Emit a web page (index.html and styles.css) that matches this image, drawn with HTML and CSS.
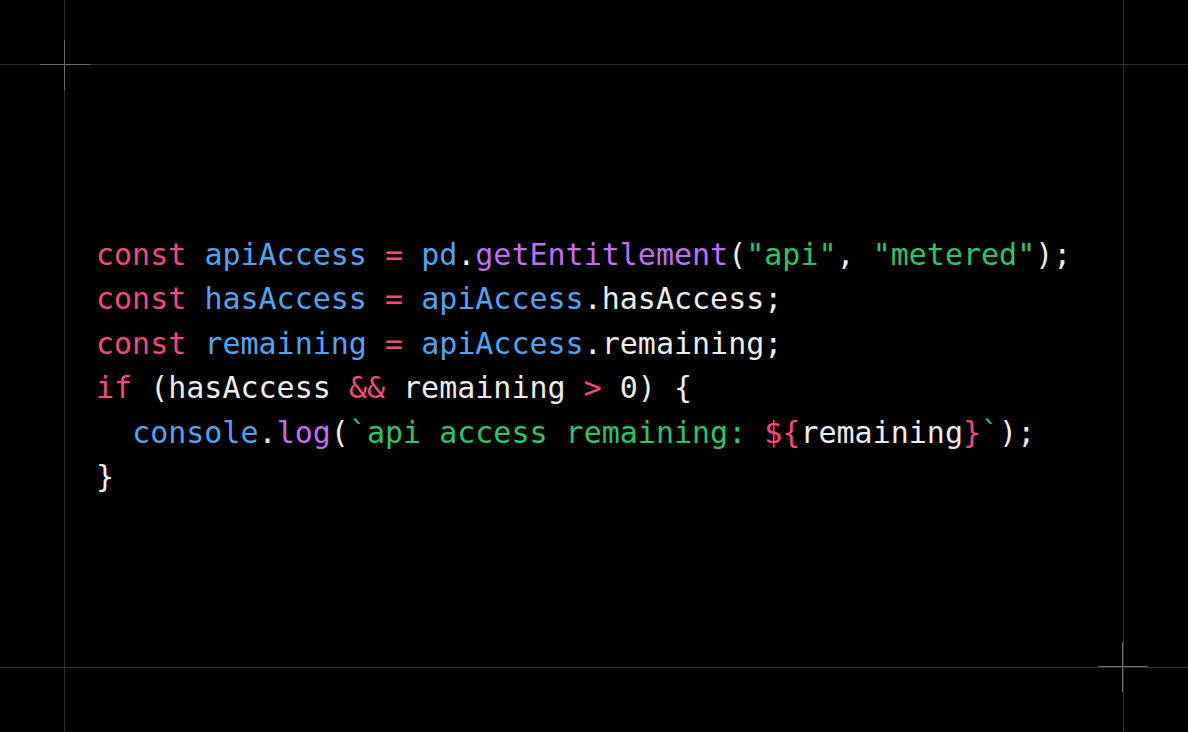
FILE: index.html
```html
<!DOCTYPE html>
<html lang="en">
<head>
<meta charset="utf-8">
<title>Entitlement snippet</title>
<link rel="stylesheet" href="styles.css">
</head>
<body>
<div class="stage">
  <div class="frame">
    <pre class="code"><code><span class="kw">const</span> <span class="var">apiAccess</span> <span class="kw">=</span> <span class="var">pd</span><span class="plain">.</span><span class="fn">getEntitlement</span><span class="plain">(</span><span class="str">"api"</span><span class="plain">, </span><span class="str">"metered"</span><span class="plain">);</span>
<span class="kw">const</span> <span class="var">hasAccess</span> <span class="kw">=</span> <span class="var">apiAccess</span><span class="plain">.hasAccess;</span>
<span class="kw">const</span> <span class="var">remaining</span> <span class="kw">=</span> <span class="var">apiAccess</span><span class="plain">.remaining;</span>
<span class="kw">if</span> <span class="plain">(hasAccess</span> <span class="kw">&amp;&amp;</span> <span class="plain">remaining</span> <span class="kw">&gt;</span> <span class="plain">0) {</span>
  <span class="var">console</span><span class="plain">.</span><span class="fn">log</span><span class="plain">(</span><span class="str">`api access remaining: </span><span class="kw">${</span><span class="plain">remaining</span><span class="kw">}</span><span class="str">`</span><span class="plain">);</span>
<span class="plain">}</span></code></pre>
  </div>
  <div class="guides-v"></div>
  <div class="guides-h"></div>
  <div class="cross cross-tl"></div>
  <div class="cross cross-br"></div>
</div>
</body>
</html>
```

FILE: styles.css
```css
html, body {
  margin: 0;
  padding: 0;
  background: #000;
}

.stage {
  position: relative;
  width: 1188px;
  height: 732px;
  box-sizing: border-box;
  padding: 65px 65px 65px 65px;
  display: flex;
  overflow: hidden;
}

.frame {
  flex: 1;
  display: flex;
  align-items: center;
  padding: 0 0 0 31px;
}

.code {
  margin: 0;
  font-family: "DejaVu Sans Mono", "Liberation Mono", monospace;
  font-size: 30px;
  line-height: 44.5px;
  color: #ededed;
  white-space: pre;
}

.kw { color: #f2497a; }
.var { color: #4ea4f0; }
.fn { color: #bf6ef7; }
.str { color: #2cc46a; }
.plain { color: #ededed; }

.guides-v {
  position: absolute;
  top: 0;
  bottom: 0;
  left: 64px;
  right: 64px;
  border-left: 1px solid #2e2e2e;
  border-right: 1px solid #2e2e2e;
  pointer-events: none;
}

.guides-h {
  position: absolute;
  left: 0;
  right: 0;
  top: 64px;
  bottom: 64px;
  border-top: 1px solid #2e2e2e;
  border-bottom: 1px solid #2e2e2e;
  pointer-events: none;
}

.cross {
  position: absolute;
  width: 50px;
  height: 50px;
  pointer-events: none;
}
.cross::before,
.cross::after {
  content: "";
  position: absolute;
  background: #6a6a6a;
}
.cross::before {
  left: 0;
  right: 0;
  top: 24px;
  height: 1px;
}
.cross::after {
  top: 0;
  bottom: 0;
  left: 24px;
  width: 1px;
}
.cross-tl { left: 40px; top: 40px; }
.cross-br { left: 1098px; top: 642px; }
```
